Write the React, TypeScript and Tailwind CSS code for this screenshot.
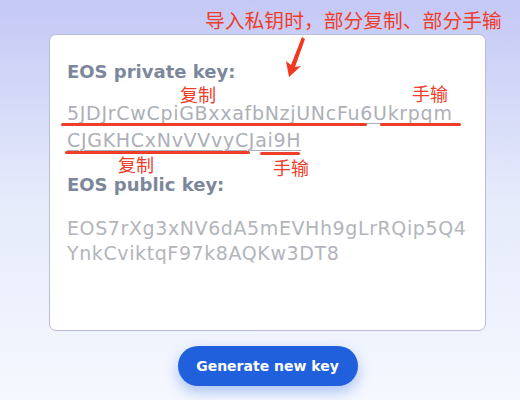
import React from "react";

const cjk = { fontFamily: '"Noto Sans CJK SC", "Noto Sans", sans-serif' };
const sans = { fontFamily: '"DejaVu Sans", "Noto Sans", sans-serif' };

const red = "text-[#ee3d28]";

function Arrow() {
  return (
    <svg className="absolute left-[280px] top-[34px]" width="30" height="46" viewBox="0 0 30 46">
      <path d="M22 3 L25 5 L15 33 L21 32 L9 43 L6 27 L11 31 Z" fill="#f2381f" />
    </svg>
  );
}

function Mark({ className }: { className: string }) {
  return <div className={"absolute h-[3px] rounded-full bg-[#ee3d28] " + className} />;
}

export default function App() {
  return (
    <div className="relative w-[520px] h-[400px] overflow-hidden bg-gradient-to-b from-[#c4c8f5] via-[#e6ebfb] to-[#f5f8fe]" style={sans}>
      <div className={"absolute left-[205px] top-[6px] text-[19.8px] leading-[28px] whitespace-nowrap " + red} style={cjk}>
        导入私钥时，部分复制、部分手输
      </div>

      <div className="ml-[49px] pt-[34px] w-[437px] flex flex-col items-center gap-[15px]">
        <div className="relative w-full h-[297px] bg-white border border-[#b9bdd6] rounded-[7px] px-[17px] pt-[25px] flex flex-col">
          <div className="text-[18px] font-bold text-[#7c879b] leading-[24px]">EOS private key:</div>
          <div className="mt-[16px] text-[19px] tracking-[0.7px] text-[#adb0b7] leading-[27px] underline decoration-[#adb0b7] underline-offset-[3px] decoration-1 whitespace-nowrap">
            <div>5JDJrCwCpiGBxxafbNzjUNcFu6Ukrpqm</div>
            <div>CJGKHCxNvVVvyCJai9H</div>
          </div>
          <div className="mt-[19px] text-[18px] font-bold text-[#7c879b] leading-[24px]">EOS public key:</div>
          <div className="mt-[19px] text-[19px] tracking-[0.6px] text-[#b2b5bb] leading-[25px] whitespace-nowrap">
            <div>EOS7rXg3xNV6dA5mEVHh9gLrRQip5Q4</div>
            <div>YnkCviktqF97k8AQKw3DT8</div>
          </div>

          {/* annotations drawn over the card */}
          <div className={"absolute left-[130px] top-[48px] text-[18px] leading-[22px] " + red} style={cjk}>复制</div>
          <div className={"absolute left-[362px] top-[47px] text-[18px] leading-[22px] " + red} style={cjk}>手输</div>
          <Mark className="left-[11px] top-[88px] w-[306px]" />
          <Mark className="left-[330px] top-[88px] w-[81px]" />
          <Mark className="left-[15px] top-[116px] w-[185px]" />
          <Mark className="left-[210px] top-[117px] w-[40px]" />
          <div className={"absolute left-[68px] top-[118px] text-[18px] leading-[22px] " + red} style={cjk}>复制</div>
          <div className={"absolute left-[223px] top-[121px] text-[18px] leading-[22px] " + red} style={cjk}>手输</div>
        </div>

        <button className="w-[180px] h-[40px] rounded-full bg-[#2160dc] text-white text-[14px] font-semibold shadow-[0_6px_14px_rgba(33,96,220,0.35)]">
          Generate new key
        </button>
      </div>

      <Arrow />
    </div>
  );
}
